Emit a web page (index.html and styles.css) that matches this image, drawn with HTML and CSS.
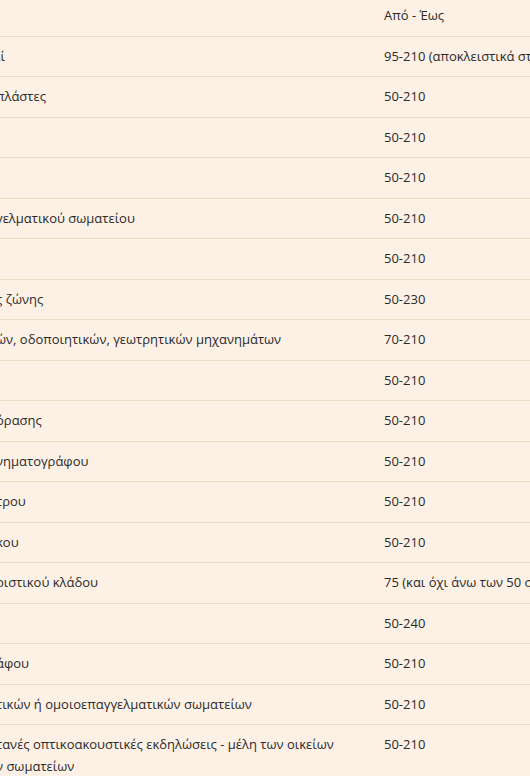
FILE: index.html
```html
<!DOCTYPE html>
<html lang="el">
<head>
<meta charset="utf-8">
<title>Αμοιβές</title>
<link rel="stylesheet" href="styles.css">
</head>
<body>
<div class="viewport">
  <table class="rates">
    <thead>
      <tr><th class="cat">Κατηγορία</th><th class="range">Από - Έως</th></tr>
    </thead>
    <tbody>
      <tr><td class="cat">ιί</td><td class="range">95-210 (αποκλειστικά στον κινηματογράφο)</td></tr>
      <tr><td class="cat">πλάστες</td><td class="range">50-210</td></tr>
      <tr><td class="cat"></td><td class="range">50-210</td></tr>
      <tr><td class="cat"></td><td class="range">50-210</td></tr>
      <tr><td class="cat">γελματικού σωματείου</td><td class="range">50-210</td></tr>
      <tr><td class="cat"></td><td class="range">50-210</td></tr>
      <tr><td class="cat">ς ζώνης</td><td class="range">50-230</td></tr>
      <tr><td class="cat">ών, οδοποιητικών, γεωτρητικών μηχανημάτων</td><td class="range">70-210</td></tr>
      <tr><td class="cat"></td><td class="range">50-210</td></tr>
      <tr><td class="cat">όρασης</td><td class="range">50-210</td></tr>
      <tr><td class="cat">νηματογράφου</td><td class="range">50-210</td></tr>
      <tr><td class="cat">τρου</td><td class="range">50-210</td></tr>
      <tr><td class="cat">κου</td><td class="range">50-210</td></tr>
      <tr><td class="cat">ριστικού κλάδου</td><td class="range">75 (και όχι άνω των 50 σε ετήσια βάση)</td></tr>
      <tr><td class="cat"></td><td class="range">50-240</td></tr>
      <tr><td class="cat">άφου</td><td class="range">50-210</td></tr>
      <tr><td class="cat">τικών ή ομοιοεπαγγελματικών σωματείων</td><td class="range">50-210</td></tr>
      <tr><td class="cat">τανές οπτικοακουστικές εκδηλώσεις - μέλη των οικείων<br>ν σωματείων</td><td class="range">50-210</td></tr>
    </tbody>
  </table>
</div>
</body>
</html>
```

FILE: styles.css
```css
html, body {
  margin: 0;
  padding: 0;
  background: #fdf1e6;
}

body {
  font-family: "Open Sans", "Noto Sans", sans-serif;
  font-size: 13px;
  color: #2a2a2a;
}

.viewport {
  width: 530px;
  height: 776px;
  overflow: hidden;
}

.rates {
  border-collapse: collapse;
  table-layout: fixed;
  width: 800px;
  margin: -4px 0 0 -14px;
}

.rates th,
.rates td {
  font-weight: normal;
  text-align: left;
  vertical-align: top;
  padding: 9px 10px;
  line-height: 21.5px;
  border-bottom: 1px solid #efdac6;
  white-space: nowrap;
}

.rates .cat {
  width: 368px;
  overflow: hidden;
}

.rates th.cat {
  color: transparent;
}

.rates .range {
  width: 392px;
}
```
